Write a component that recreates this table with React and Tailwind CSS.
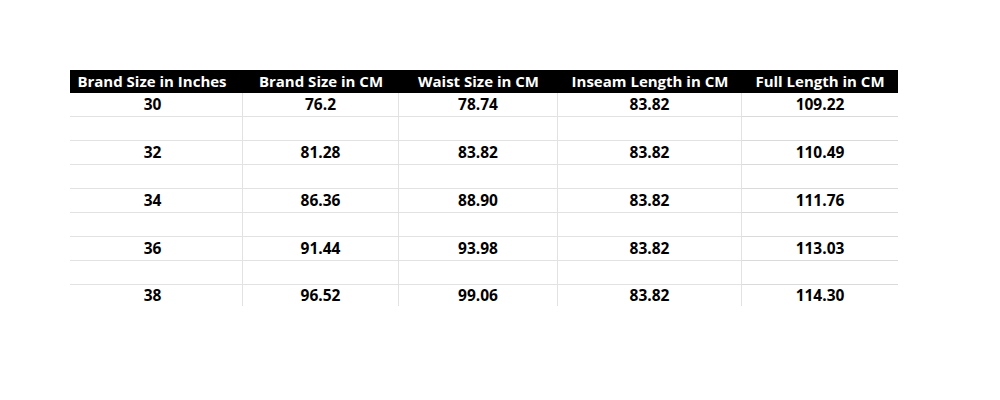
const headers = [
  "Brand Size in Inches",
  "Brand Size in CM",
  "Waist Size in CM",
  "Inseam Length in CM",
  "Full Length in CM",
];

const rows = [
  ["30", "76.2", "78.74", "83.82", "109.22"],
  null,
  ["32", "81.28", "83.82", "83.82", "110.49"],
  null,
  ["34", "86.36", "88.90", "83.82", "111.76"],
  null,
  ["36", "91.44", "93.98", "83.82", "113.03"],
  null,
  ["38", "96.52", "99.06", "83.82", "114.30"],
];

export default function App() {
  return (
    <div className="w-[1000px] h-[400px] bg-white font-['Open_Sans',sans-serif] text-black">
      <div className="pt-[70px] pl-[70px]">
        <div className="grid w-[828px] grid-cols-[173px_156px_159px_184px_156px]">
          {headers.map((h, c) => (
            <div
              key={h}
              className={`h-[23px] bg-black text-white text-[15px] font-bold flex items-center justify-center leading-none ${
                c === 0 ? "pr-[9px]" : ""
              }`}
            >
              {h}
            </div>
          ))}
          {rows.map((r, i) => {
            const last = i === rows.length - 1;
            return [0, 1, 2, 3, 4].map((c) => (
              <div
                key={`${i}-${c}`}
                className={`flex items-center justify-center text-[15.5px] font-bold leading-none ${
                  last ? "h-[21px]" : "h-[24px] border-b border-[#dadada]"
                } ${c < 4 ? "border-r border-[#e2e2e2]" : ""} ${c === 0 ? "pr-[7px]" : ""}`}
              >
                {r ? r[c] : ""}
              </div>
            ));
          })}
        </div>
      </div>
    </div>
  );
}
